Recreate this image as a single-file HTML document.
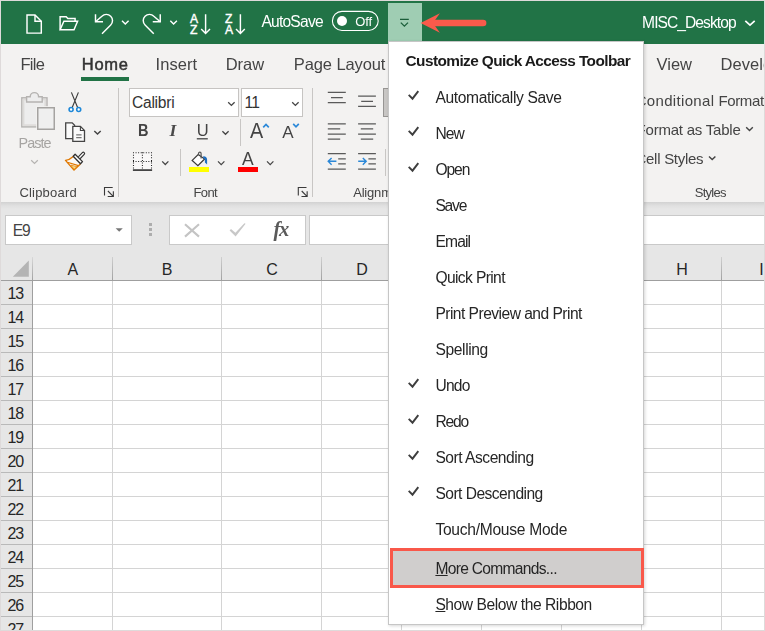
<!DOCTYPE html>
<html lang="en">
<head>
<meta charset="utf-8">
<title>Customize Quick Access Toolbar</title>
<style>
html,body{margin:0;padding:0;background:#fff;}
body{width:765px;height:631px;overflow:hidden;position:relative;font-family:"Liberation Sans",sans-serif;}
#app{position:absolute;left:0;top:0;width:765px;height:631px;overflow:hidden;background:#fff;}
.abs{position:absolute;}
.t{position:absolute;line-height:1;white-space:nowrap;font-family:"Liberation Sans",sans-serif;}
.ts{font-family:"Liberation Serif",serif;}
#titlebar{left:0;top:0;width:765px;height:44px;background:#217346;}
#ribbon{left:0;top:44px;width:765px;height:158px;background:#f3f2f1;}
#ribshadow{left:0;top:202px;width:765px;height:7px;background:linear-gradient(#d2d2d2,#e0e0e0 55%,#e6e6e6);}
#fbar{left:0;top:209px;width:765px;height:71px;background:#e6e6e6;}
.box{position:absolute;background:#fff;border:1px solid #c9c9c9;box-sizing:border-box;}
.rbox{position:absolute;background:#fff;border:1px solid #c6c4c2;box-sizing:border-box;}
.vsep{position:absolute;width:1px;background:#c8c6c4;}
#grid{left:0;top:281px;width:765px;height:350px;background:#fff;}
#rowhdr{left:0;top:281px;width:32px;height:350px;background:#e6e6e6;}
.hl{position:absolute;height:1px;background:#d4d4d4;}
.vl{position:absolute;width:1px;background:#d4d4d4;}
#menu{left:388px;top:41px;width:256px;height:584px;background:#fff;border:1px solid #c6c6c6;box-sizing:border-box;box-shadow:1px 1px 3px rgba(0,0,0,0.16);}
#qat{left:388px;top:3px;width:34px;height:38px;background:#9fcdb3;}
#hilite{left:390px;top:548px;width:254px;height:40px;box-sizing:border-box;border:3px solid #f9584a;background:#d0cecd;}
#frame{left:0;top:0;width:765px;height:631px;box-sizing:border-box;border:1px solid #dedada;pointer-events:none;}
svg{position:absolute;overflow:visible;}
</style>
</head>
<body>
<div id="app">
<!-- ================= base layer ================= -->
<div id="titlebar" class="abs"></div>
<div id="ribbon" class="abs"></div>
<div id="ribshadow" class="abs"></div>
<div id="fbar" class="abs"></div>
<div id="grid" class="abs"></div>
<div id="rowhdr" class="abs"></div>
<div class="abs" style="left:0;top:280px;width:765px;height:1px;background:#9f9f9f"></div>
<div class="abs" style="left:32px;top:280px;width:1px;height:351px;background:#9f9f9f"></div>
<div class="abs" style="left:112px;top:257px;width:1px;height:23px;background:linear-gradient(#cfcfcf,#a2a2a2)"></div>
<div class="vl" style="left:112px;top:281px;height:350px"></div>
<div class="abs" style="left:221px;top:257px;width:1px;height:23px;background:linear-gradient(#cfcfcf,#a2a2a2)"></div>
<div class="vl" style="left:221px;top:281px;height:350px"></div>
<div class="abs" style="left:321px;top:257px;width:1px;height:23px;background:linear-gradient(#cfcfcf,#a2a2a2)"></div>
<div class="vl" style="left:321px;top:281px;height:350px"></div>
<div class="abs" style="left:401px;top:257px;width:1px;height:23px;background:linear-gradient(#cfcfcf,#a2a2a2)"></div>
<div class="vl" style="left:401px;top:281px;height:350px"></div>
<div class="abs" style="left:481px;top:257px;width:1px;height:23px;background:linear-gradient(#cfcfcf,#a2a2a2)"></div>
<div class="vl" style="left:481px;top:281px;height:350px"></div>
<div class="abs" style="left:561px;top:257px;width:1px;height:23px;background:linear-gradient(#cfcfcf,#a2a2a2)"></div>
<div class="vl" style="left:561px;top:281px;height:350px"></div>
<div class="abs" style="left:641px;top:257px;width:1px;height:23px;background:linear-gradient(#cfcfcf,#a2a2a2)"></div>
<div class="vl" style="left:641px;top:281px;height:350px"></div>
<div class="abs" style="left:721px;top:257px;width:1px;height:23px;background:linear-gradient(#cfcfcf,#a2a2a2)"></div>
<div class="vl" style="left:721px;top:281px;height:350px"></div>
<div class="abs" style="left:32px;top:257px;width:1px;height:23px;background:linear-gradient(#d8d8d8,#a2a2a2)"></div>
<div class="hl" style="left:33px;top:304px;width:732px"></div>
<div class="abs" style="left:0;top:304px;width:32px;height:1px;background:#b9b9b9"></div>
<div class="hl" style="left:33px;top:328px;width:732px"></div>
<div class="abs" style="left:0;top:328px;width:32px;height:1px;background:#b9b9b9"></div>
<div class="hl" style="left:33px;top:352px;width:732px"></div>
<div class="abs" style="left:0;top:352px;width:32px;height:1px;background:#b9b9b9"></div>
<div class="hl" style="left:33px;top:376px;width:732px"></div>
<div class="abs" style="left:0;top:376px;width:32px;height:1px;background:#b9b9b9"></div>
<div class="hl" style="left:33px;top:400px;width:732px"></div>
<div class="abs" style="left:0;top:400px;width:32px;height:1px;background:#b9b9b9"></div>
<div class="hl" style="left:33px;top:424px;width:732px"></div>
<div class="abs" style="left:0;top:424px;width:32px;height:1px;background:#b9b9b9"></div>
<div class="hl" style="left:33px;top:448px;width:732px"></div>
<div class="abs" style="left:0;top:448px;width:32px;height:1px;background:#b9b9b9"></div>
<div class="hl" style="left:33px;top:472px;width:732px"></div>
<div class="abs" style="left:0;top:472px;width:32px;height:1px;background:#b9b9b9"></div>
<div class="hl" style="left:33px;top:496px;width:732px"></div>
<div class="abs" style="left:0;top:496px;width:32px;height:1px;background:#b9b9b9"></div>
<div class="hl" style="left:33px;top:520px;width:732px"></div>
<div class="abs" style="left:0;top:520px;width:32px;height:1px;background:#b9b9b9"></div>
<div class="hl" style="left:33px;top:544px;width:732px"></div>
<div class="abs" style="left:0;top:544px;width:32px;height:1px;background:#b9b9b9"></div>
<div class="hl" style="left:33px;top:568px;width:732px"></div>
<div class="abs" style="left:0;top:568px;width:32px;height:1px;background:#b9b9b9"></div>
<div class="hl" style="left:33px;top:592px;width:732px"></div>
<div class="abs" style="left:0;top:592px;width:32px;height:1px;background:#b9b9b9"></div>
<div class="hl" style="left:33px;top:616px;width:732px"></div>
<div class="abs" style="left:0;top:616px;width:32px;height:1px;background:#b9b9b9"></div>
<svg style="left:12px;top:260px" width="18" height="18" viewBox="0 0 18 18"><path d="M16.8 0.6V16.8H0.8Z" fill="#b4b4b4"/></svg>
<!-- formula bar -->
<div class="box" style="left:5px;top:215px;width:127px;height:30px"></div>
<div class="box" style="left:169px;top:215px;width:137px;height:30px"></div>
<div class="box" style="left:309px;top:215px;width:460px;height:30px"></div>
<svg style="left:115px;top:227px" width="9" height="6" viewBox="0 0 9 6"><path d="M0.6 1.2H7.8L4.2 4.8Z" fill="#777"/></svg>
<div class="abs" style="left:149px;top:223px;width:3px;height:3px;background:#adadad"></div>
<div class="abs" style="left:149px;top:228px;width:3px;height:3px;background:#adadad"></div>
<div class="abs" style="left:149px;top:233px;width:3px;height:3px;background:#adadad"></div>
<svg style="left:184px;top:223px" width="16" height="15" viewBox="0 0 16 15"><path d="M1 1.2L15 13.6M15 1.2L1 13.6" stroke="#c4c4c4" stroke-width="2.1" fill="none"/></svg>
<svg style="left:229px;top:223px" width="18" height="15" viewBox="0 0 18 15"><path d="M0.6 7.4L6.6 13.4L16.6 0.8L15.4 0.2L6.4 9.8L2 6Z" fill="#c8c8c8" stroke="none"/></svg>
<!-- title bar icons -->
<svg style="left:0;top:0" width="765" height="44" viewBox="0 0 765 44" fill="none" stroke="#fff" stroke-width="1.45" stroke-linejoin="miter">
<path d="M27 14.9H35L41.3 21.2V33.1H27Z"/>
<path d="M35 14.9V21.2H41.3"/>
<path d="M60.1 29.6V16.7H66.2L67.8 18.5H75.1V21.3"/>
<path d="M60.1 29.8L63.9 21.3H77.6L74 29.8Z"/>
<path d="M95.5 14.3V21.8H103"/>
<path d="M95.5 21.8L101.9 16.2A6.2 6.2 0 0 1 110.7 25L102 33.7"/>
<path d="M122 20.8L125.3 24L128.6 20.8"/>
<path d="M160.25 14.3V21.8H152.75"/>
<path d="M160.25 21.8L153.85 16.2A6.2 6.2 0 0 0 145.05 25L153.75 33.7"/>
<path d="M170.3 20.8L173.6 24L176.9 20.8"/>
<path d="M205.6 14.2V33.2M201.2 29L205.6 33.4L210 29"/>
<path d="M240.4 14.2V33.2M236 29L240.4 33.4L244.8 29"/>
<rect x="332.4" y="11.4" width="45.8" height="19.1" rx="9.55" stroke-width="1.1"/>
<circle cx="342" cy="21" r="5" fill="#fff" stroke="none"/>
<path d="M745.3 20.8L750 25.2L754.7 20.8" stroke-width="1.7"/>
<g font-family="Liberation Sans, sans-serif" font-size="12.1" fill="#fff" stroke="#fff" stroke-width="0.4">
<text x="190" y="22.7">A</text>
<text x="190" y="33.9">Z</text>
<text x="225.1" y="22.7">Z</text>
<text x="225.1" y="33.9">A</text>
</g>
</svg>
<!-- ribbon: home tab underline, separators, boxes -->
<div class="abs" style="left:81px;top:77px;width:48px;height:4px;background:#217346"></div>
<div class="vsep" style="left:118px;top:88px;height:109px"></div>
<div class="vsep" style="left:312px;top:88px;height:109px"></div>
<div class="vsep" style="left:240px;top:119px;height:27px"></div>
<div class="vsep" style="left:180px;top:149px;height:27px"></div>
<div class="vsep" style="left:385px;top:149px;height:27px"></div>
<div class="rbox" style="left:129px;top:88px;width:110px;height:29px"></div>
<div class="rbox" style="left:241px;top:88px;width:62px;height:29px"></div>
<div class="abs" style="left:383px;top:88px;width:8px;height:29px;background:#c8c6c4;border:1px solid #979593;box-sizing:border-box"></div>
<svg style="left:0;top:0" width="765" height="210" viewBox="0 0 765 210" fill="none" stroke="#444" stroke-width="1.3">
<!-- paste (disabled) -->
<rect x="21.8" y="97.8" width="25.2" height="29.1" fill="#ededed" stroke="#b5b3b1" stroke-width="1.4"/>
<rect x="23.6" y="99.6" width="21.6" height="25.5" fill="none" stroke="#dddbd9" stroke-width="1.6"/>
<path d="M26.6 102V96.8H30.2A4.2 4.2 0 0 1 38.6 96.8H42.2V102Z" fill="#ededed" stroke="#b5b3b1" stroke-width="1.4"/>
<rect x="36.2" y="106.2" width="19.6" height="24.6" fill="#f3f2f1" stroke="none"/>
<rect x="37.75" y="107.75" width="16.5" height="21.5" fill="#efefef" stroke="#a5a3a1" stroke-width="1.5"/>
<path d="M31.2 160.2L34.5 163.4L37.8 160.2" stroke="#b5b3b1" stroke-width="1.2"/>
<!-- cut -->
<path d="M71.4 92.4L77.7 107.7M78.4 92.4L72.1 107.7" stroke="#3c3c3c" stroke-width="1.15"/>
<circle cx="71.1" cy="109.5" r="2" stroke="#1e88d8" stroke-width="1.6" fill="#fff"/>
<circle cx="78.7" cy="109.5" r="2" stroke="#1e88d8" stroke-width="1.6" fill="#fff"/>
<!-- copy -->
<path d="M73 138.6H65.7V122.8H72.2L74.6 125.2V127" stroke-width="1.3" fill="#fafafa"/>
<path d="M72.8 126.4H80.4L84.5 130.5V141.3H72.8Z" stroke-width="1.3" fill="#fafafa"/>
<path d="M80.4 126.4V130.5H84.5" stroke-width="1.1"/>
<path d="M76.2 134.8H81.6M76.2 137.7H81.6" stroke="#777" stroke-width="1.2"/>
<path d="M94.3 130.9L97.5 134.1L100.7 130.9" stroke-width="1.4"/>
<!-- format painter -->
<path d="M73.3 156.4Q69.6 159.7 65.5 160.4L74 170.1L80.4 164" fill="#faf9f8" stroke="#e07800" stroke-width="1.4" stroke-linejoin="round"/>
<path d="M67.4 162.3L78.4 165.6" stroke="#e07800" stroke-width="1.2"/>
<path d="M70.8 165L76.8 166.7L74.1 169.2Z" fill="#fbe08a" stroke="#e07800" stroke-width="0.7"/>
<path d="M79.8 157.2L83.3 153.5" stroke="#333" stroke-width="3.7" stroke-linecap="round"/>
<path d="M79.2 157.8L83.3 153.5" stroke="#fff" stroke-width="1.3" stroke-linecap="round"/>
<path d="M75.1 154.3L82.5 161.6L80.5 163.8L73.2 156.3Z" fill="#fff" stroke="#333" stroke-width="1.3" stroke-linejoin="round"/>
<!-- dialog launchers -->
<g stroke="#3a3a3a" stroke-width="1.1">
<path d="M104.5 195.6V187.5H112.7M107.9 191L113.2 196.3M113.35 191.3V196.45H107.7"/>
<path d="M298.3 195.6V187.5H306.5M301.7 191L307.0 196.3M307.15 191.3V196.45H301.5"/>
</g>
<!-- font box chevrons -->
<path d="M228.2 102.2L231.4 105.4L234.6 102.2" stroke-width="1.3"/>
<path d="M292.2 102.2L295.4 105.4L298.6 102.2" stroke-width="1.3"/>
<!-- underline of U + chevron -->
<path d="M196.8 138.8H207.8" stroke-width="1.3"/>
<path d="M222.4 131.2L225.5 134.3L228.6 131.2" stroke-width="1.25"/>
<!-- grow/shrink carets -->
<path d="M263.2 127.3L266 124.4L268.8 127.3" stroke="#2b88d8" stroke-width="1.7"/>
<path d="M293.2 123.9L296 126.8L298.8 123.9" stroke="#2b88d8" stroke-width="1.7"/>
<!-- borders icon -->
<rect x="133" y="152.2" width="19" height="17" fill="#f9f8f8" stroke="none"/>
<g stroke="#222" stroke-width="1.05" stroke-dasharray="1 1.56">
<path d="M133 152.7H152.2M133 161.5H152.2M133.5 152.2V169.4M142.4 152.2V169.4M151.5 152.2V169.4"/>
</g>
<path d="M132.9 170.1H152.1" stroke="#444" stroke-width="1.8"/>
<path d="M162.2 161.4L165.3 164.5L168.4 161.4" stroke-width="1.25"/>
<!-- fill color -->
<path d="M192.2 160.4L198.2 154.6L204.6 159L197.9 165.7Z" fill="#fff" stroke="#3a3a3a" stroke-width="1.25" stroke-linejoin="miter"/>
<path d="M198.5 155V153.5A1.3 1.3 0 0 1 201.1 153.5V158.4" stroke="#555" stroke-width="1.2"/>
<path d="M203.2 156.2C205.6 156 207.1 157.5 207.1 159.6V164.6L204.9 162.4V159.6L203.2 157.9Z" fill="#1f6fc2" stroke="none"/>
<rect x="189" y="167" width="20" height="5" fill="#ffff00" stroke="none"/>
<path d="M218 161.4L221.2 164.6L224.4 161.4" stroke-width="1.25"/>
<!-- font color -->
<rect x="238" y="167" width="20" height="5" fill="#ff0000" stroke="none"/>
<path d="M267 161.4L270.2 164.6L273.4 161.4" stroke-width="1.25"/>
<!-- alignment icons -->
<g stroke="#5a5a5a" stroke-width="1.25">
<path d="M327.8 92.4H345.8M331 97.5H342.8M327.8 102.5H345.8"/>
<path d="M358.1 96.2H375.9M361.2 101.3H373M358.1 106.4H375.9"/>
<path d="M327.8 123.8H345.8M327.8 128.9H340.2M327.8 134H345.8M327.8 139.2H340.2"/>
<path d="M358.1 123.8H375.9M360.8 128.9H373.2M358.1 134H375.9M360.8 139.2H373.2"/>
<path d="M327.8 153.6H345.8M338.2 158.8H345.8M338.2 163.9H345.8M327.8 169.1H345.8"/>
<path d="M358.1 153.6H375.9M368.4 158.8H375.9M368.4 163.9H375.9M358.1 169.1H375.9"/>
</g>
<g stroke="#2b88d8" stroke-width="1.4">
<path d="M328.2 161.3H336.4M331.6 157.9L328.2 161.3L331.6 164.7"/>
<path d="M358.2 161.3H366.2M362.8 157.9L366.2 161.3L362.8 164.7"/>
</g>
<!-- styles chevrons -->
<path d="M746.2 127.2L749.5 130.5L752.8 127.2" stroke-width="1.4"/>
<path d="M709 156.4L712.2 159.6L715.4 156.4" stroke-width="1.4"/>
</svg>

<span class="t" style="left:132.00px;top:95.00px;font-size:15.6px;color:#333;letter-spacing:-0.267px;">Calibri</span>
<span class="t" style="left:244.60px;top:95.00px;font-size:15.6px;color:#333;letter-spacing:-0.787px;">11</span>
<span class="t" style="left:12.70px;top:223.00px;font-size:15.6px;color:#444;letter-spacing:-1.200px;">E9</span>
<span class="t" style="left:67.40px;top:261.80px;font-size:16px;color:#262626;">A</span>
<span class="t" style="left:161.70px;top:261.80px;font-size:16px;color:#262626;">B</span>
<span class="t" style="left:266.20px;top:261.80px;font-size:16px;color:#262626;">C</span>
<span class="t" style="left:356.20px;top:261.80px;font-size:16px;color:#262626;">D</span>
<span class="t" style="left:435.70px;top:261.80px;font-size:16px;color:#262626;">E</span>
<span class="t" style="left:515.70px;top:261.80px;font-size:16px;color:#262626;">F</span>
<span class="t" style="left:595.70px;top:261.80px;font-size:16px;color:#262626;">G</span>
<span class="t" style="left:676.20px;top:261.80px;font-size:16px;color:#262626;">H</span>
<span class="t" style="left:759.30px;top:261.80px;font-size:16px;color:#262626;">I</span>
<span class="t" style="left:7.60px;top:285.80px;font-size:16px;color:#262626;letter-spacing:-1.200px;">13</span>
<span class="t" style="left:7.60px;top:309.80px;font-size:16px;color:#262626;letter-spacing:-1.200px;">14</span>
<span class="t" style="left:7.60px;top:333.80px;font-size:16px;color:#262626;letter-spacing:-1.200px;">15</span>
<span class="t" style="left:7.60px;top:357.80px;font-size:16px;color:#262626;letter-spacing:-1.200px;">16</span>
<span class="t" style="left:7.60px;top:381.80px;font-size:16px;color:#262626;letter-spacing:-1.200px;">17</span>
<span class="t" style="left:7.60px;top:405.80px;font-size:16px;color:#262626;letter-spacing:-1.200px;">18</span>
<span class="t" style="left:7.60px;top:429.80px;font-size:16px;color:#262626;letter-spacing:-1.200px;">19</span>
<span class="t" style="left:7.60px;top:453.80px;font-size:16px;color:#262626;letter-spacing:-1.200px;">20</span>
<span class="t" style="left:7.60px;top:477.80px;font-size:16px;color:#262626;letter-spacing:-1.200px;">21</span>
<span class="t" style="left:7.60px;top:501.80px;font-size:16px;color:#262626;letter-spacing:-1.200px;">22</span>
<span class="t" style="left:7.60px;top:525.80px;font-size:16px;color:#262626;letter-spacing:-1.200px;">23</span>
<span class="t" style="left:7.60px;top:549.80px;font-size:16px;color:#262626;letter-spacing:-1.200px;">24</span>
<span class="t" style="left:7.60px;top:573.80px;font-size:16px;color:#262626;letter-spacing:-1.200px;">25</span>
<span class="t" style="left:7.60px;top:597.80px;font-size:16px;color:#262626;letter-spacing:-1.200px;">26</span>
<span class="t" style="left:7.60px;top:621.80px;font-size:16px;color:#262626;letter-spacing:-1.200px;">27</span>
<div id="gs" class="abs" style="left:0;top:0;width:765px;height:250px;will-change:transform">
<span class="t" style="left:261.40px;top:14.00px;font-size:15.6px;color:#fff;letter-spacing:-0.775px;">AutoSave</span>
<span class="t" style="left:355.30px;top:15.30px;font-size:13px;color:#fff;letter-spacing:-0.205px;">Off</span>
<span class="t" style="left:642.10px;top:15.00px;font-size:15.6px;color:#fff;letter-spacing:-0.943px;">MISC_Desktop</span>
<span class="t" style="left:20.40px;top:56.05px;font-size:16.5px;color:#444;letter-spacing:-0.665px;">File</span>
<span class="t" style="left:81.80px;top:56.05px;font-size:16.5px;color:#333;letter-spacing:0.695px;-webkit-text-stroke:0.5px #333;">Home</span>
<span class="t" style="left:155.60px;top:56.05px;font-size:16.5px;color:#444;letter-spacing:0.024px;">Insert</span>
<span class="t" style="left:225.70px;top:56.05px;font-size:16.5px;color:#444;letter-spacing:-0.039px;">Draw</span>
<span class="t" style="left:293.80px;top:56.05px;font-size:16.5px;color:#444;letter-spacing:-0.107px;">Page Layout</span>
<span class="t" style="left:656.50px;top:56.05px;font-size:16.5px;color:#444;letter-spacing:0.010px;">View</span>
<span class="t" style="left:720.60px;top:56.05px;font-size:16.5px;color:#444;letter-spacing:0.023px;">Developer</span>
<span class="t" style="left:18.50px;top:136.10px;font-size:14.4px;color:#a6a4a2;letter-spacing:-0.953px;">Paste</span>
<span class="t" style="left:19.40px;top:186.30px;font-size:13px;color:#444;letter-spacing:0.205px;">Clipboard</span>
<span class="t" style="left:138.20px;top:122.05px;font-size:16.5px;font-weight:700;color:#444;transform:scaleX(0.88);transform-origin:0 0;">B</span>
<span class="t ts" style="left:169.40px;top:121.55px;font-size:17.5px;font-weight:700;color:#4a4a4a;font-style:italic;">I</span>
<span class="t" style="left:196.70px;top:122.05px;font-size:16.5px;color:#444;">U</span>
<span class="t" style="left:250.20px;top:119.80px;font-size:22px;color:#444;transform:scaleX(0.9);transform-origin:0 0;">A</span>
<span class="t" style="left:282.20px;top:124.30px;font-size:17px;color:#444;">A</span>
<span class="t" style="left:242.20px;top:149.30px;font-size:19px;color:#444;transform:scaleX(0.92);transform-origin:0 0;">A</span>
<span class="t" style="left:193.40px;top:186.30px;font-size:13px;color:#444;letter-spacing:-0.572px;">Font</span>
<span class="t" style="left:353.20px;top:186.30px;font-size:13px;color:#444;letter-spacing:-0.189px;">Alignment</span>
<span class="t" style="left:635.70px;top:93.30px;font-size:15px;color:#444;letter-spacing:0.324px;">Conditional</span>
<span class="t" style="left:718.40px;top:93.30px;font-size:15px;color:#444;letter-spacing:-0.345px;">Formatting</span>
<span class="t" style="left:636.60px;top:122.30px;font-size:15px;color:#444;letter-spacing:-0.220px;">Format as Table</span>
<span class="t" style="left:635.50px;top:151.30px;font-size:15px;color:#444;letter-spacing:-0.276px;">Cell Styles</span>
<span class="t" style="left:694.80px;top:186.30px;font-size:13px;color:#444;letter-spacing:-0.741px;">Styles</span>
<span class="t ts" style="left:273.40px;top:219.05px;font-size:20.5px;font-weight:700;color:#5a5a5a;letter-spacing:-1.200px;font-style:italic;">fx</span>
</div>
<!-- ================= menu layer ================= -->
<div id="qat" class="abs"></div>
<div id="menu" class="abs"></div>
<div id="hilite" class="abs"></div>
<!-- QAT button icon + annotation arrow -->
<svg style="left:0;top:0" width="765" height="44" viewBox="0 0 765 44" fill="none">
<path d="M400 19.3H408.8M400.8 22.6L404.4 26.2L408 22.6" stroke="#1b5e3a" stroke-width="1.3"/>
<path d="M436 23H483.1" stroke="#fa5a4b" stroke-width="6.6" stroke-linecap="round"/>
<path d="M420.6 23L439.9 13.2L434.4 21V25L439.9 32.8Z" fill="#fa5a4b"/>
</svg>
<svg style="left:0;top:0" width="765" height="631" viewBox="0 0 765 631" fill="none" stroke="#3e3e3e" stroke-width="1.9">
<path d="M408.7 94.9L412.5 98.7L418.3 91.1"/>
<path d="M408.7 130.9L412.5 134.7L418.3 127.1"/>
<path d="M408.7 166.9L412.5 170.7L418.3 163.1"/>
<path d="M408.7 382.9L412.5 386.7L418.3 379.1"/>
<path d="M408.7 418.9L412.5 422.7L418.3 415.1"/>
<path d="M408.7 454.9L412.5 458.7L418.3 451.1"/>
<path d="M408.7 490.9L412.5 494.7L418.3 487.1"/>
</svg>

<span class="t" style="left:405.60px;top:53.10px;font-size:15.4px;font-weight:700;color:#1b1b1b;letter-spacing:-0.584px;">Customize Quick Access Toolbar</span>
<span class="t" style="left:435.40px;top:90.00px;font-size:15.6px;color:#262626;letter-spacing:-0.359px;">Automatically Save</span>
<span class="t" style="left:435.40px;top:126.00px;font-size:15.6px;color:#262626;letter-spacing:-0.852px;">New</span>
<span class="t" style="left:435.40px;top:162.00px;font-size:15.6px;color:#262626;letter-spacing:-1.052px;">Open</span>
<span class="t" style="left:435.40px;top:198.00px;font-size:15.6px;color:#262626;letter-spacing:-1.200px;">Save</span>
<span class="t" style="left:435.40px;top:234.00px;font-size:15.6px;color:#262626;letter-spacing:-0.825px;">Email</span>
<span class="t" style="left:435.40px;top:270.00px;font-size:15.6px;color:#262626;letter-spacing:-0.617px;">Quick Print</span>
<span class="t" style="left:435.40px;top:306.00px;font-size:15.6px;color:#262626;letter-spacing:-0.528px;">Print Preview and Print</span>
<span class="t" style="left:435.40px;top:342.00px;font-size:15.6px;color:#262626;letter-spacing:-0.369px;">Spelling</span>
<span class="t" style="left:435.40px;top:378.00px;font-size:15.6px;color:#262626;letter-spacing:-0.760px;">Undo</span>
<span class="t" style="left:435.40px;top:414.00px;font-size:15.6px;color:#262626;letter-spacing:-1.127px;">Redo</span>
<span class="t" style="left:435.40px;top:450.00px;font-size:15.6px;color:#262626;letter-spacing:-0.477px;">Sort Ascending</span>
<span class="t" style="left:435.40px;top:486.00px;font-size:15.6px;color:#262626;letter-spacing:-0.528px;">Sort Descending</span>
<span class="t" style="left:435.40px;top:522.00px;font-size:15.6px;color:#262626;letter-spacing:-0.273px;">Touch/Mouse Mode</span>
<span class="t" style="left:435.40px;top:561.00px;font-size:15.6px;color:#262626;letter-spacing:-0.701px;"><u>M</u>ore Commands...</span>
<span class="t" style="left:435.40px;top:597.00px;font-size:15.6px;color:#262626;letter-spacing:-0.434px;"><u>S</u>how Below the Ribbon</span>
<div id="frame" class="abs"></div>
</div>
</body>
</html>
